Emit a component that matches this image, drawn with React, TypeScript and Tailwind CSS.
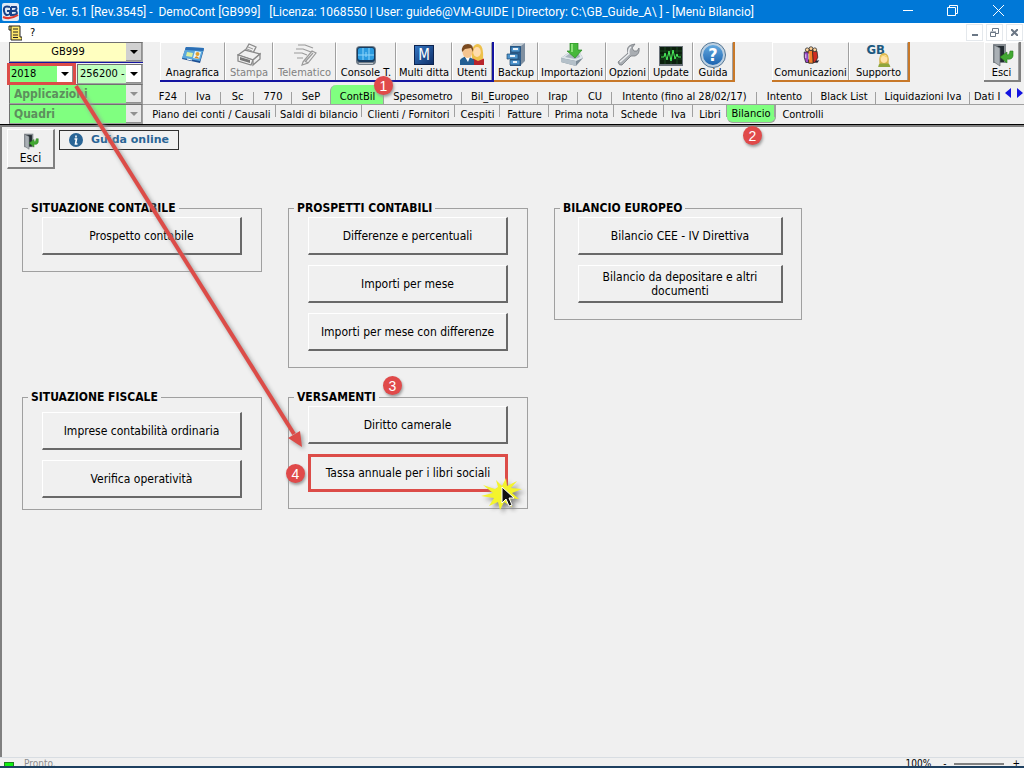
import type { ReactNode } from 'react';
import clsx from 'clsx';

const Svg = ({ children, size = 24 }: { children: ReactNode; size?: number }) => (
  <svg width={size} height={size} viewBox="0 0 24 24" aria-hidden="true">
    {children}
  </svg>
);

const CardIcon = () => (
  <Svg>
    <path d="M5 4 23 6 19 20 1 16Z" fill="#1d4f94" />
    <path d="M5 4 23 5 19 18 1 15Z" fill="#5aa7dc" />
    <path d="M5 4 23 5 22 8 4 7Z" fill="#2c6fb5" />
    <path d="M6 9 12 10 11 14 5 13Z" fill="#d9efa0" />
    <path d="M14 8 20 9 18 16 12 15Z" fill="#e8f4fb" />
    <circle cx="16.500" cy="11" r="2" fill="#e0a030" />
    <path d="M13.500 15q2-4 5 0.800Z" fill="#d98a20" />
    <path d="M6 16 11 17" stroke="#fff" />
  </Svg>
);

const PrinterIcon = () => (
  <Svg>
    <g fill="#f0f0f0" stroke="#8a8a8a" strokeWidth="1.3">
      <path d="M8 8 12 1 19 4 16 10Z" />
      <path d="M1 12 8 7 23 11 16 17Z" />
      <path d="M1 12V18L14 22 16 17Z" />
      <path d="M16 17V22L23 16V11Z" />
    </g>
    <path d="M3 14 13 17V20L3 17Z" fill="#777" />
    <path d="M11 4 16 6M10 6 15 8" stroke="#999" />
  </Svg>
);

const SendIcon = () => (
  <Svg>
    <g fill="none" stroke="#9a9a9a" strokeWidth="1.2">
      <path d="M5 2H12L20 5M3 6H10L18 9M1 10H9L14 12M4 15H10" />
      <path d="M10 19 19 8 23 10 15 20 9 22Z" fill="#f0f0f0" />
      <path d="M20 10 12 19M12 18 15 20" />
    </g>
  </Svg>
);

const ConsoleIcon = () => (
  <Svg>
    <rect x="2" y="3" width="20" height="19" rx="4" fill="#6f7b86" />
    <rect x="3" y="4" width="18" height="15" rx="3" fill="#173a5e" />
    <rect x="4" y="5" width="16" height="12" rx="2" fill="#2b9be0" />
    <path d="M9 5V17M15 5V17M4 12H20M12 9V14" stroke="#8fd6fb" strokeWidth="1" />
    <path d="M5 20.500H19" stroke="#c3cad0" />
  </Svg>
);

const MultiIcon = () => (
  <span className="flex size-5 items-center justify-center border border-[#0d2450] bg-linear-to-br from-[#3576c2] to-[#10316b] text-[15px] leading-none text-white">
    M
  </span>
);

const UsersIcon = () => (
  <Svg>
    <path d="M12 22V16Q18 11 24 16V22Z" fill="#b8242a" />
    <path d="M12 15Q11 1 18 1Q24 2 23 16L18 18Z" fill="#eec14b" />
    <ellipse cx="17" cy="9" rx="3.800" ry="5" fill="#ffdcae" />
    <path d="M0 22V17Q6 10 14 17V22Z" fill="#235f93" />
    <path d="M5 14 8 19 10 14Z" fill="#fff" />
    <ellipse cx="7.500" cy="9" rx="5" ry="6" fill="#f5c48f" />
    <path d="M2 9Q1 1 8 1Q14 1 13 9L11 5 5 6Z" fill="#7a4a20" />
  </Svg>
);

const CabinetIcon = () => (
  <Svg>
    <path d="M6 3 10 0H21V18L16 23Z" fill="#7f8fa0" />
    <path d="M6 3 10 0H21L17 3Z" fill="#c3ccd4" />
    <path d="M6 3H17V23H6Z" fill="#2f5d8c" />
    <path d="M7 4H16V9H7ZM3 11H14V16H3ZM6 17H16V22H6Z" fill="#4e94cd" stroke="#1d4a73" strokeWidth=".7" />
    <path d="M9 6H14M6 13H11M9 19H13" stroke="#e8f2fa" strokeWidth="2" />
  </Svg>
);

const ImportIcon = () => (
  <Svg>
    <path d="M1 15 8 10H20L23 15 16 23 1 19Z" fill="#7d8c98" />
    <path d="M1 15 8 10H20L23 15 16 18Z" fill="#dfe6eb" />
    <path d="M5 14 9 11H19L20 14 15 16Z" fill="#a9b5be" />
    <path d="M1 15 16 18V23L1 19Z" fill="#b4c0c9" />
    <path d="M10 0H18V7H22L15 15 7 8H10Z" fill="#46b83b" stroke="#2a8622" strokeWidth=".7" />
    <path d="M12 1V9" stroke="#a3ee8e" strokeWidth="1.500" />
  </Svg>
);

const WrenchIcon = () => (
  <Svg>
    <path
      d="M2 19 12 10Q10 4 15 2L19 1 16 5 18 8 21 8 23 5Q24 11 19 13L15 13 6 22Q3 23 2 19Z"
      fill="#a9adb2"
      stroke="#767b80"
      strokeWidth=".8"
    />
    <path d="M4 19 13 11Q12 6 15 4" stroke="#eceef0" strokeWidth="1.500" fill="none" />
  </Svg>
);

const MonitorIcon = () => (
  <Svg>
    <rect x="0" y="3" width="24" height="20" fill="#6b737b" />
    <rect x="1" y="4" width="22" height="17" fill="#0b1f0d" />
    <path d="M1 8H23M1 12H23M1 16H23M6 4V21M12 4V21M18 4V21" stroke="#1c5a26" strokeWidth=".7" />
    <path d="M2 14H5L6 10 8 17 10 8 12 18 14 7 16 16 18 11 19 14H22" stroke="#4af25c" fill="none" />
  </Svg>
);

const HelpIcon = () => (
  <span className="flex size-6 items-center justify-center rounded-full border-2 border-[#bcd0e2] bg-linear-to-b from-[#63a9df] to-[#1b64b0] text-[18px] leading-none font-bold text-white outline outline-[#4d7292]">
    ?
  </span>
);

const PeopleIcon = () => (
  <Svg size={18}>
    <path d="M3 8H9V22H5L3 15Z" fill="#9a48c8" stroke="#222" />
    <path d="M8 6H15V23H9Z" fill="#f5812a" stroke="#222" />
    <path d="M14 7H20L21 15 18 22H15Z" fill="#d12c20" stroke="#222" />
    <path d="M17 20 23 19 20 23Z" fill="#223" />
    <g fill="#ffd39b" stroke="#222">
      <circle cx="7" cy="5" r="2.500" />
      <circle cx="12" cy="3.500" r="2.500" />
      <circle cx="17" cy="5" r="2.500" />
    </g>
    <path d="M9 10V18M5 11V16" stroke="#fff" />
  </Svg>
);

const SupportIcon = () => (
  <span className="relative flex h-6 w-6 items-start">
    <span className="text-[13px] leading-[13px] font-bold text-[#1d5a80]">GB</span>
    <span className="absolute right-0 bottom-0">
      <Svg size={14}>
        <path d="M2 24Q3 15 12 15T23 24Z" fill="#8fa63c" />
        <path d="M4 18Q2 0 12 0T20 18Z" fill="#d9b44c" />
        <ellipse cx="12" cy="10" rx="6" ry="7" fill="#ffe2a8" />
        <path d="M6 8Q9 1 17 7" fill="none" stroke="#f3cf62" strokeWidth="2" />
      </Svg>
    </span>
  </span>
);

const ExitIcon = ({ size = 24 }: { size?: number }) => (
  <Svg size={size}>
    <path d="M3 1H16V20H3Z" fill="#858b90" />
    <path d="M5 3H14V19H5Z" fill="#222a30" />
    <path d="M4 2 10 5V23L4 19Z" fill="#aab0b5" stroke="#60666b" strokeWidth=".7" />
    <path d="M23 8V13Q22 17 17 16V20L10 14 17 9V12Q20 12 20 8Z" fill="#42a832" stroke="#287c1d" strokeWidth=".6" />
  </Svg>
);

type Tool = { label: string; width: string; icon: ReactNode; disabled?: boolean };

const blueTools: Tool[] = [
  { label: 'Anagrafica', width: 'w-[65px]', icon: <CardIcon /> },
  { label: 'Stampa', width: 'w-[48px]', icon: <PrinterIcon />, disabled: true },
  { label: 'Telematico', width: 'w-[63px]', icon: <SendIcon />, disabled: true },
  { label: 'Console T.', width: 'w-[60px]', icon: <ConsoleIcon /> },
  { label: 'Multi ditta', width: 'w-[56px]', icon: <MultiIcon /> },
  { label: 'Utenti', width: 'w-[40px]', icon: <UsersIcon /> },
];

const orangeTools: Tool[] = [
  { label: 'Backup', width: 'w-[44px]', icon: <CabinetIcon /> },
  { label: 'Importazioni', width: 'w-[68px]', icon: <ImportIcon /> },
  { label: 'Opzioni', width: 'w-[43px]', icon: <WrenchIcon /> },
  { label: 'Update', width: 'w-[44px]', icon: <MonitorIcon /> },
  { label: 'Guida', width: 'w-[40px]', icon: <HelpIcon /> },
];

const supportTools: Tool[] = [
  { label: 'Comunicazioni', width: 'w-[77px]', icon: <PeopleIcon /> },
  { label: 'Supporto', width: 'w-[59px]', icon: <SupportIcon /> },
];

const exitTools: Tool[] = [{ label: 'Esci', width: 'w-[35px]', icon: <ExitIcon /> }];

const ToolGroup = ({ tools, className }: { tools: Tool[]; className: string }) => (
  <div className={clsx('flex h-10 shrink-0 border-r-2 border-b-2', className)}>
    {tools.map((tool) => (
      <button
        key={tool.label}
        type="button"
        disabled={tool.disabled}
        className={clsx(
          'flex flex-col items-center border-t border-r border-l border-t-white border-r-[#a0a0a0] border-l-white whitespace-nowrap disabled:text-[#808080]',
          tool.width,
        )}
      >
        <span className="flex h-6 items-center">{tool.icon}</span>
        <span className="leading-3">{tool.label}</span>
      </button>
    ))}
  </div>
);

const Badge = ({ n, className }: { n: number; className: string }) => (
  <span
    className={clsx(
      'absolute z-30 flex size-[19px] items-center justify-center rounded-full bg-[#e04a4a] font-["Liberation_Sans",sans-serif] text-[14px] leading-none font-normal text-white shadow-[1px_2px_3px_#999]',
      className,
    )}
  >
    {n}
  </span>
);

type ComboProps = {
  label: string;
  value: string;
  className: string;
  selectClass?: string;
  boxClass?: string;
  disabled?: boolean;
};

const Combo = ({ label, value, className, selectClass, boxClass = 'bg-white', disabled }: ComboProps) => (
  <div className={clsx('relative h-5 border border-[#a0a0a0] border-t-[#707070] border-l-[#707070]', className)}>
    <select
      aria-label={label}
      disabled={disabled}
      className={clsx(
        'block h-full w-full appearance-none pr-4 leading-4 opacity-100 outline-none',
        selectClass,
      )}
    >
      <option>{value}</option>
    </select>
    <span
      className={clsx(
        'pointer-events-none absolute top-0 right-0 flex h-full w-4 items-center justify-center border-r border-b border-[#909090]',
        boxClass,
      )}
    >
      <span
        className={clsx(
          'border-x-4 border-t-4 border-x-transparent',
          disabled ? 'border-t-[#909090]' : 'border-t-black',
        )}
      />
    </span>
  </div>
);

const appTabs = [
  { label: 'F24', width: 'w-[36px]' },
  { label: 'Iva', width: 'w-[35px]' },
  { label: 'Sc', width: 'w-[33px]' },
  { label: '770', width: 'w-[38px]' },
  { label: 'SeP', width: 'w-[38px]' },
  { label: 'ContBil', width: 'w-[54px]' },
  { label: 'Spesometro', width: 'w-[78px]' },
  { label: 'Bil_Europeo', width: 'w-[76px]' },
  { label: 'Irap', width: 'w-[40px]' },
  { label: 'CU', width: 'w-[34px]' },
  { label: 'Intento (fino al 28/02/17)', width: 'w-[145px]' },
  { label: 'Intento', width: 'w-[55px]' },
  { label: 'Black List', width: 'w-[64px]' },
  { label: 'Liquidazioni Iva', width: 'w-[94px]' },
];

const sheetTabs = [
  { label: 'Piano dei conti / Causali', width: 'w-[129px]' },
  { label: 'Saldi di bilancio', width: 'w-[86px]' },
  { label: 'Clienti / Fornitori', width: 'w-[93px]' },
  { label: 'Cespiti', width: 'w-[45px]' },
  { label: 'Fatture', width: 'w-[49px]' },
  { label: 'Prima nota', width: 'w-[65px]' },
  { label: 'Schede', width: 'w-[50px]' },
  { label: 'Iva', width: 'w-[29px]' },
  { label: 'Libri', width: 'w-[34px]' },
  { label: 'Bilancio', width: 'w-[49px]' },
  { label: 'Controlli', width: 'w-[54px]' },
];

type GroupProps = { title: string; children: ReactNode; bodyClass?: string };

const Group = ({ title, children, bodyClass = 'px-[19px] pt-px pb-4' }: GroupProps) => (
  <fieldset className="relative min-w-0 border border-[#a0a0a0]">
    <legend className="ml-[5px] px-[3px] text-[12px] leading-4 font-bold whitespace-nowrap">{title}</legend>
    <div className={clsx('flex flex-col gap-[10px]', bodyClass)}>{children}</div>
  </fieldset>
);

const MenuButton = ({ children, marked }: { children: ReactNode; marked?: boolean }) => (
  <button
    type="button"
    className={clsx(
      'h-[38px] px-2 text-[12px] leading-[14px]',
      marked
        ? 'border-3 border-[#dc4c48]'
        : 'border-t border-r-2 border-b-2 border-l border-t-white border-r-[#696969] border-b-[#696969] border-l-white',
    )}
  >
    {children}
  </button>
);

const TitleBar = () => (
  <header className="flex h-[23px] items-center bg-[#0078d7] pl-[2px] text-white">
    <svg width="17" height="18" viewBox="0 0 17 18" aria-hidden="true">
      <rect width="17" height="18" rx="2" fill="#dfe9f5" />
      <path d="M8 4Q1 2 2 8T8 11V8H5M9 4H14Q16 7 11 8H9V4M9 8H14Q17 12 10 12H9V8" fill="none" stroke="#17428a" strokeWidth="2" />
      <path d="M1 14Q8 17 16 12" stroke="#e03a2e" strokeWidth="2" fill="none" />
    </svg>
    <h1 className="flex-1 pl-1 font-[Roboto,sans-serif] text-[12px] whitespace-pre">
      {'GB - Ver. 5.1 [Rev.3545] -  DemoCont [GB999]   [Licenza: 1068550 | User: guide6@VM-GUIDE | Directory: C:\\GB_Guide_A\\ ] - [Menù Bilancio]'}
    </h1>
    <div className="flex pr-[2px] pb-[2px]">
      <button type="button" aria-label="Riduci" className="flex w-[45px] justify-center">
        <svg width="10" height="10" stroke="#fff"><path d="M0 5.500H10" /></svg>
      </button>
      <button type="button" aria-label="Ripristina" className="flex w-[45px] justify-center">
        <svg width="11" height="11" stroke="#fff" fill="none"><path d="M.5 2.500H8.500V10.500H.5ZM2.500 2.500V.5H10.500V8.500H8.500" /></svg>
      </button>
      <button type="button" aria-label="Chiudi" className="flex w-[47px] justify-center">
        <svg width="11" height="11" stroke="#fff"><path d="M0 0 11 11M11 0 0 11" /></svg>
      </button>
    </div>
  </header>
);

const MenuBar = () => (
  <div className="flex h-[19px] items-center justify-between bg-white pr-px pl-2">
    <div className="flex items-center gap-2">
      <svg width="14" height="16" viewBox="0 0 14 16" aria-hidden="true">
        <path d="M3 1H12V12H14V15H3V5H1V1H3V5" fill="#ffe96b" stroke="#222" />
        <path d="M5 4H10M5 7H10M5 10H10M5 12.500H10" stroke="#222" />
      </svg>
      <button type="button">?</button>
    </div>
    <div className="flex gap-[3px] text-[#6b7785]">
      <button type="button" aria-label="Riduci finestra" className="flex h-[17px] w-[17px] items-center justify-center border border-[#e4e8ec]">
        <svg width="7" height="9"><path d="M1 7H7" stroke="currentColor" strokeWidth="2" /></svg>
      </button>
      <button type="button" aria-label="Ripristina finestra" className="flex h-[17px] w-[17px] items-center justify-center border border-[#e4e8ec]">
        <svg width="9" height="9" stroke="currentColor" fill="none"><path d="M.5 4.500H5.500V8.500H.5ZM.5 4H6M2.500 3V.5H8.500V5.500H6" /></svg>
      </button>
      <button type="button" aria-label="Chiudi finestra" className="flex h-[17px] w-[17px] items-center justify-center border border-[#e4e8ec]">
        <svg width="7" height="7" stroke="currentColor" strokeWidth="2"><path d="M0 0 7 7M7 0 0 7" /></svg>
      </button>
    </div>
  </div>
);

// puntatore del mouse con l'effetto clic
const ClickMark = () => (
  <svg className="pointer-events-none absolute right-1 -bottom-1 z-10 drop-shadow-[3px_3px_2px_#888]" width="42" height="34" viewBox="0 0 42 34">
    <path
      d="M17 9 15 2 21 8 25 0 26 8 36 3 30 10 41 11 31 15 38 21 29 20 31 29 23 24 19 32 17 24 8 28 13 20 0 18 12 15 2 7 14 11Z"
      fill="#f4f42c"
    />
    <path d="M21 9V25L25 21 28 28 31 27 28 20H33Z" fill="#111" stroke="#fff" />
  </svg>
);

const App = () => {
  return (
    <div className='relative flex min-h-screen flex-col overflow-hidden bg-[#f0f0f0] font-["DejaVu_Sans_Condensed","DejaVu_Sans",sans-serif] text-[11px] leading-4 text-black'>
      <TitleBar />
      <MenuBar />

      <div className="flex border-b border-black">
        <div className="flex w-[138px] shrink-0 flex-col pl-[9px]">
          <Combo label="Ditta" value="GB999" className="mr-[-5px] bg-[#ffffc0]" selectClass="text-center" boxClass="bg-[#d0d0d0]" />
          <div className="mr-[-5px] flex gap-[3px] border-t border-[#1414a0] pt-px">
            <div className="relative">
              <Combo label="Anno" value="2018" className="w-[65px] bg-[#80ff80]" selectClass="pl-px" />
              <span className="pointer-events-none absolute -inset-x-[2px] -inset-y-px z-10 border-3 border-[#dc4c48]" />
            </div>
            <Combo label="Attività" value="256200 -" className="flex-1 bg-[#c0ffc0]" selectClass="pl-[2px]" />
          </div>
          <Combo label="Applicazioni" value="Applicazioni" disabled className="mr-[-5px] bg-[#80ff80] text-[12px] font-bold text-[#5d8f5d]" selectClass="pl-1" boxClass="bg-[#e8e8e8]" />
          <Combo label="Quadri" value="Quadri" disabled className="mr-[-5px] bg-[#80ff80] text-[12px] font-bold text-[#5d8f5d]" selectClass="pl-1" boxClass="bg-[#e8e8e8]" />
        </div>

        <div className="min-w-0 flex-1">
          <div className="flex pr-[3px] pl-[22px]">
            <ToolGroup tools={blueTools} className="border-[#1414a0]" />
            <ToolGroup tools={orangeTools} className="border-[#c87828]" />
            <div className="w-[37px]" />
            <ToolGroup tools={supportTools} className="border-[#c87828]" />
            <div className="flex-1" />
            <ToolGroup tools={exitTools} className="border-[#808080]" />
          </div>

          <nav className="flex h-[23px] items-end border-b border-[#a0a0a0] pl-3">
            {appTabs.map((tab) => (
              <button
                key={tab.label}
                type="button"
                className={clsx(
                  'relative h-[19px] shrink-0 pt-1 whitespace-nowrap',
                  tab.width,
                  tab.label === 'ContBil' && 'rounded-t-md border-l border-[#a0a0a0] bg-[#80ff80]',
                  tab.label !== 'SeP' && 'after:absolute after:right-0 after:bottom-0 after:h-3 after:w-px after:bg-[#a0a0a0]',
                )}
              >
                {tab.label}
                {tab.label === 'ContBil' && <Badge n={1} className="-top-[9px] -right-[9px]" />}
              </button>
            ))}
            <button type="button" className="h-[19px] flex-1 pt-1 pl-1 text-left whitespace-nowrap">
              Dati I
            </button>
            <div className="flex shrink-0 gap-[6px] self-center pr-px">
              <button type="button" aria-label="Schede precedenti" className="border-y-5 border-r-6 border-y-transparent border-r-[#1414e0]" />
              <button type="button" aria-label="Schede successive" className="border-y-5 border-l-6 border-y-transparent border-l-[#1414e0]" />
            </div>
          </nav>

          <nav className="flex h-[19px] items-start pl-[9px]">
            {sheetTabs.map((tab) => (
              <button
                key={tab.label}
                type="button"
                className={clsx(
                  'relative h-[18px] shrink-0 pt-px whitespace-nowrap',
                  tab.width,
                  tab.label === 'Bilancio' && 'rounded-b-md border-r border-b border-[#a0a0a0] bg-[#80ff80]',
                  tab.label !== 'Controlli' && 'after:absolute after:top-0 after:right-0 after:h-3 after:w-px after:bg-[#a0a0a0]',
                )}
              >
                {tab.label}
                {tab.label === 'Bilancio' && <Badge n={2} className="top-[21px] left-4" />}
              </button>
            ))}
          </nav>
        </div>
      </div>

      <main className="flex-1 border-t-2 border-l-2 border-[#808080] pt-[2px] pl-[5px]">
        <div className="flex items-start gap-1">
          <button
            type="button"
            className="flex h-10 w-12 flex-col items-center border-t border-r-2 border-b-2 border-l border-t-white border-r-[#808080] border-b-[#808080] border-l-white pt-[3px] text-[12px]"
          >
            <ExitIcon size={17} />
            <span className="leading-[17px]">Esci</span>
          </button>
          <a
            href="#guida"
            className='mt-px flex h-5 w-[120px] items-center gap-2 border border-[#303030] pl-[9px] font-["DejaVu_Sans",sans-serif] font-bold text-[#2a6596]'
          >
            <svg width="14" height="14" viewBox="0 0 14 14" aria-hidden="true">
              <circle cx="7" cy="7" r="7" fill="#2a6596" />
              <path d="M7 2.500V4.500M5.500 6H7.500L6.500 11H8.500" stroke="#fff" strokeWidth="1.600" fill="none" />
            </svg>
            Guida online
          </a>
        </div>

        <div className="mt-[31px] grid grid-cols-[240px_240px_248px] items-start gap-x-[26px] gap-y-[21px] pl-[15px]">
          <Group title="SITUAZIONE CONTABILE">
            <MenuButton>Prospetto contabile</MenuButton>
          </Group>
          <Group title="PROSPETTI CONTABILI">
            <MenuButton>Differenze e percentuali</MenuButton>
            <MenuButton>Importi per mese</MenuButton>
            <MenuButton>Importi per mese con differenze</MenuButton>
          </Group>
          <Group title="BILANCIO EUROPEO" bodyClass="pt-px pr-[18px] pb-4 pl-[23px]">
            <MenuButton>Bilancio CEE - IV Direttiva</MenuButton>
            <MenuButton>Bilancio da depositare e altri documenti</MenuButton>
          </Group>
          <Group title="SITUAZIONE FISCALE" bodyClass="px-[19px] pt-[7px] pb-[11px]">
            <MenuButton>Imprese contabilità ordinaria</MenuButton>
            <MenuButton>Verifica operatività</MenuButton>
          </Group>
          <Group title="VERSAMENTI">
            <MenuButton>Diritto camerale</MenuButton>
            <MenuButton marked>Tassa annuale per i libri sociali</MenuButton>
            <Badge n={3} className="-top-[29px] left-[94px]" />
            <Badge n={4} className="bottom-[25px] -left-[3px]" />
            <ClickMark />
          </Group>
        </div>
      </main>

      <footer className="flex h-[11px] items-start overflow-hidden border-t border-b-2 border-t-[#d8dde2] border-b-[#1e4060] pl-1 text-[10px] leading-[12px]">
        <span className="mt-1 h-2 w-[10px] border border-[#208020] bg-[#10f010]" />
        <span className="pl-[10px] text-[#8c8c8c]">Pronto.</span>
        <span className="ml-auto pr-3">100%</span>
        <button type="button" aria-label="Riduci zoom">-</button>
        <span className="mx-2 mt-[5px] h-[2px] w-[50px] bg-[#808080]" />
        <button type="button" aria-label="Aumenta zoom" className="pr-1">+</button>
      </footer>

      {/* freccia dall'anno al pulsante della tassa annuale */}
      <svg className="pointer-events-none absolute top-0 left-0 z-20 drop-shadow-[2px_2px_2px_#999]" width="320" height="460">
        <path d="M76 86 294 434" stroke="#dc4c48" strokeWidth="4" />
        <path d="M302 447 300 431 288 438Z" fill="#dc4c48" />
      </svg>
    </div>
  );
};

export default App;
